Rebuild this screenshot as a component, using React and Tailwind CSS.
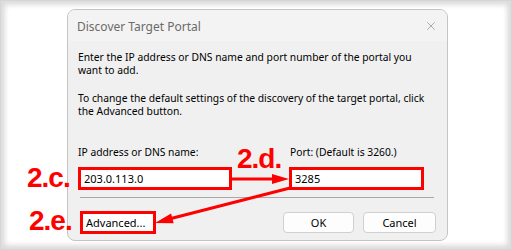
import { X } from "lucide-react";

const ui = { fontFamily: '"Noto Sans", "Open Sans", sans-serif' };
const mark = { fontFamily: '"Liberation Sans", Arial, sans-serif' };

const Arrows = () => (
  <svg className="absolute left-0 top-0 pointer-events-none" width="512" height="250">
    <line x1="231" y1="179" x2="274" y2="179" stroke="#ff0000" strokeWidth="3" />
    <polygon points="289,179 272,174 272,184" fill="#ff0000" />
    <line x1="290" y1="188" x2="171" y2="218.5" stroke="#ff0000" strokeWidth="3" />
    <polygon points="155,223 173.7,223.2 171.1,213.6" fill="#ff0000" />
  </svg>
);

export default function App() {
  return (
    <div className="relative w-[512px] h-[250px] overflow-hidden bg-white shadow-[inset_0_0_0_1px_#d6d6d6,inset_0_0_5px_5px_#dcdcdc]" style={ui}>
      <div className="pt-[9px] pl-[67px]">
        <div className="w-[381px] h-[232px] rounded-[8px] border border-[#c4c4c4] bg-[#f0f0f0] overflow-hidden flex flex-col">
          <div className="h-[31px] shrink-0 bg-[#f3f3f3] flex items-center justify-between pl-[9px] pr-[9px]">
            <span className="text-[12px] text-[#6a6a6a] pt-[3px]">Discover Target Portal</span>
            <X size={14} strokeWidth={1} className="text-[#777]" />
          </div>
          <div className="flex flex-col pt-[10px] px-[10px] text-[10.3px] leading-[13px] text-black whitespace-nowrap">
            <p>Enter the IP address or DNS name and port number of the portal you</p>
            <p>want to add.</p>
            <p className="mt-[15px]">To change the default settings of the discovery of the target portal, click</p>
            <p>the Advanced button.</p>
            <div className="flex mt-[28px]">
              <div className="w-[154px] flex flex-col">
                <span>IP address or DNS name:</span>
                <div className="mt-[8px] h-[23px] border-[3px] border-[#ff0000] bg-white pl-[3px] text-[11px] leading-[17px]">203.0.113.0</div>
              </div>
              <div className="ml-[57px] w-[135px] flex flex-col">
                <span className="pl-[1px]">Port: (Default is 3260.)</span>
                <div className="mt-[8px] h-[23px] border-[3px] border-[#ff0000] bg-white pl-[3px] text-[11px] leading-[17px]">3285</div>
              </div>
            </div>
            <div className="mt-[7px] ml-[2px] w-[354px] h-px bg-[#a8a8a8]" />
            <div className="flex items-center mt-[13px] ml-[2px]">
              <div className="w-[76px] h-[23px] border-[3px] border-[#ff0000] bg-white pl-[3px] text-[11px] leading-[17px]">Advanced...</div>
              <div className="ml-[127px] w-[71px] h-[21px] rounded-[4px] border border-[#d0d0d0] bg-[#fdfdfd] flex items-center justify-center text-[11px]">OK</div>
              <div className="ml-[9px] w-[73px] h-[21px] rounded-[4px] border border-[#d0d0d0] bg-[#fdfdfd] flex items-center justify-center text-[11px]">Cancel</div>
            </div>
          </div>
        </div>
      </div>
      <span className="absolute left-[27px] top-[164px] text-[28px] leading-[28px] font-bold text-[#ff0000] tracking-[-1px]" style={mark}>2.c.</span>
      <span className="absolute left-[237px] top-[145px] text-[28px] leading-[28px] font-bold text-[#ff0000] tracking-[-1px]" style={mark}>2.d.</span>
      <span className="absolute left-[29px] top-[207px] text-[28px] leading-[28px] font-bold text-[#ff0000] tracking-[-1px]" style={mark}>2.e.</span>
      <Arrows />
    </div>
  );
}
